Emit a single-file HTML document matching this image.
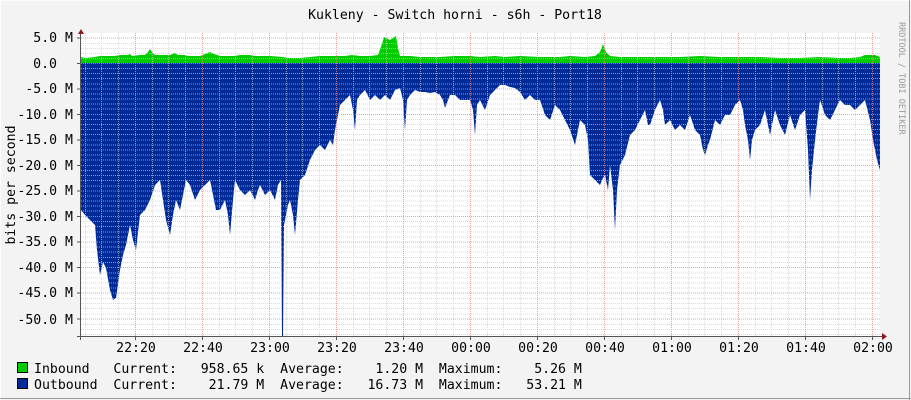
<!DOCTYPE html>
<html><head><meta charset="utf-8"><style>
html,body{margin:0;padding:0;background:#f3f3f3}
svg{display:block}
text{font-family:"DejaVu Sans Mono","Liberation Mono",monospace;font-size:13.2px;fill:#000}
</style></head><body>
<svg width="911" height="400" viewBox="0 0 911 400" xmlns="http://www.w3.org/2000/svg">
<rect x="0" y="0" width="911" height="400" fill="#f3f3f3"/>
<line x1="0" y1="0.5" x2="911" y2="0.5" stroke="#fcfcfc"/>
<line x1="0.5" y1="0" x2="0.5" y2="400" stroke="#fcfcfc"/>
<line x1="0" y1="398.5" x2="911" y2="398.5" stroke="#999"/>
<line x1="909.5" y1="0" x2="909.5" y2="400" stroke="#999"/>
<rect x="81" y="33" width="799" height="303" fill="#fff"/>
<polygon fill="#002a97" points="81,63 81,210 85,215 90,220 95,225 97,250 100,275 103,262 106,268 110,290 113,300 116,298 120,270 123,255 126,245 130,225 133,240 136,250 140,215 145,210 150,200 155,185 160,180 163,200 166,220 170,235 173,215 176,200 180,210 183,195 186,180 190,185 195,200 200,190 205,185 210,180 213,195 216,210 220,210 225,200 228,215 230,235 233,200 235,180 240,190 245,195 250,190 255,200 258,190 260,185 265,195 270,190 275,200 278,185 281,180 282,336 283,336 284,225 288,205 290,200 293,215 295,235 298,200 300,180 305,175 310,160 315,150 320,145 325,150 330,140 333,145 335,130 340,105 345,100 350,95 353,110 355,130 357,100 360,95 365,90 370,100 375,95 380,100 385,95 390,100 395,90 400,88 403,100 405,130 407,100 410,95 415,90 420,92 425,92 430,93 435,92 440,95 443,100 445,108 448,100 450,95 455,95 460,100 465,100 470,100 473,110 475,135 477,105 480,100 485,110 490,95 495,90 500,85 505,85 510,87 515,88 520,92 525,100 530,95 535,100 540,100 545,115 550,120 555,105 560,110 565,120 570,130 575,145 578,130 580,120 585,125 588,140 590,175 595,180 600,185 603,178 605,175 608,190 610,165 613,190 615,230 617,190 620,165 625,155 630,135 635,130 640,120 645,110 648,125 650,125 655,110 660,100 663,110 665,125 670,120 675,130 680,125 685,130 690,115 695,130 700,135 703,150 705,155 708,145 710,140 715,120 720,125 725,115 730,115 735,105 740,100 743,110 745,125 748,140 750,160 752,140 755,130 760,125 765,110 770,135 775,110 780,125 785,135 790,115 795,130 800,115 805,110 808,150 810,200 812,170 815,140 818,115 820,100 825,115 830,120 835,110 840,100 845,105 850,105 855,110 860,105 865,100 870,120 873,140 875,150 877,160 880,170 880,63"/>
<polygon fill="#00cc00" points="81,63 81,57 85,58 95,57 100,56 115,56 120,55 128,55 130,54 132,56 140,55 145,55 148,52 150,49 152,52 155,55 170,55 175,53 178,55 185,55 188,56 200,56 205,54 210,52 214,54 220,56 235,56 240,55 250,55 255,56 270,56 283,57 288,58 300,58 310,57 320,56 335,56 345,56 352,55 360,56 370,56 378,55 382,44 384,37 390,40 396,36 398,48 400,56 410,56 420,57 440,57 455,56 470,56 480,57 495,56 505,57 520,56 540,57 560,57 570,56 585,57 595,56 600,52 603,44 606,52 610,56 620,57 640,57 660,57 680,57 700,56 720,57 740,57 760,57 780,58 800,58 820,57 840,58 850,58 860,57 865,55 875,55 880,57 880,63"/>
<g stroke="#ccc" stroke-width="1" stroke-dasharray="1,1" opacity="0.7">
<line x1="81" y1="43.5" x2="880" y2="43.5"/><line x1="81" y1="48.5" x2="880" y2="48.5"/><line x1="81" y1="53.5" x2="880" y2="53.5"/><line x1="81" y1="58.5" x2="880" y2="58.5"/>
<line x1="81" y1="68.5" x2="880" y2="68.5"/><line x1="81" y1="73.5" x2="880" y2="73.5"/><line x1="81" y1="78.5" x2="880" y2="78.5"/><line x1="81" y1="84" x2="880" y2="84"/>
<line x1="81" y1="94" x2="880" y2="94"/><line x1="81" y1="99" x2="880" y2="99"/><line x1="81" y1="104" x2="880" y2="104"/><line x1="81" y1="109" x2="880" y2="109"/>
<line x1="81" y1="119.5" x2="880" y2="119.5"/><line x1="81" y1="124.5" x2="880" y2="124.5"/><line x1="81" y1="129.5" x2="880" y2="129.5"/><line x1="81" y1="134.5" x2="880" y2="134.5"/>
<line x1="81" y1="145" x2="880" y2="145"/><line x1="81" y1="150" x2="880" y2="150"/><line x1="81" y1="155" x2="880" y2="155"/><line x1="81" y1="160" x2="880" y2="160"/>
<line x1="81" y1="170.5" x2="880" y2="170.5"/><line x1="81" y1="175.5" x2="880" y2="175.5"/><line x1="81" y1="180.5" x2="880" y2="180.5"/><line x1="81" y1="186" x2="880" y2="186"/>
<line x1="81" y1="196" x2="880" y2="196"/><line x1="81" y1="201" x2="880" y2="201"/><line x1="81" y1="206" x2="880" y2="206"/><line x1="81" y1="211" x2="880" y2="211"/>
<line x1="81" y1="221.5" x2="880" y2="221.5"/><line x1="81" y1="226.5" x2="880" y2="226.5"/><line x1="81" y1="232" x2="880" y2="232"/><line x1="81" y1="237" x2="880" y2="237"/>
<line x1="81" y1="247" x2="880" y2="247"/><line x1="81" y1="252" x2="880" y2="252"/><line x1="81" y1="257.5" x2="880" y2="257.5"/><line x1="81" y1="262.5" x2="880" y2="262.5"/>
<line x1="81" y1="273" x2="880" y2="273"/><line x1="81" y1="278" x2="880" y2="278"/><line x1="81" y1="283" x2="880" y2="283"/><line x1="81" y1="288" x2="880" y2="288"/>
<line x1="81" y1="298.5" x2="880" y2="298.5"/><line x1="81" y1="303.5" x2="880" y2="303.5"/><line x1="81" y1="308.5" x2="880" y2="308.5"/><line x1="81" y1="314" x2="880" y2="314"/>
<line x1="81" y1="324.5" x2="880" y2="324.5"/><line x1="81" y1="329.5" x2="880" y2="329.5"/><line x1="81" y1="334.5" x2="880" y2="334.5"/>
<line x1="85.5" y1="33" x2="85.5" y2="336"/><line x1="101.5" y1="33" x2="101.5" y2="336"/><line x1="118.5" y1="33" x2="118.5" y2="336"/>
<line x1="152.5" y1="33" x2="152.5" y2="336"/><line x1="168.5" y1="33" x2="168.5" y2="336"/><line x1="185.5" y1="33" x2="185.5" y2="336"/>
<line x1="219.5" y1="33" x2="219.5" y2="336"/><line x1="235.5" y1="33" x2="235.5" y2="336"/><line x1="252.5" y1="33" x2="252.5" y2="336"/>
<line x1="286.5" y1="33" x2="286.5" y2="336"/><line x1="302.5" y1="33" x2="302.5" y2="336"/><line x1="319.5" y1="33" x2="319.5" y2="336"/>
<line x1="353.5" y1="33" x2="353.5" y2="336"/><line x1="369.5" y1="33" x2="369.5" y2="336"/><line x1="386.5" y1="33" x2="386.5" y2="336"/>
<line x1="420.5" y1="33" x2="420.5" y2="336"/><line x1="436.5" y1="33" x2="436.5" y2="336"/><line x1="453.5" y1="33" x2="453.5" y2="336"/>
<line x1="487.5" y1="33" x2="487.5" y2="336"/><line x1="503.5" y1="33" x2="503.5" y2="336"/><line x1="520.5" y1="33" x2="520.5" y2="336"/>
<line x1="554.5" y1="33" x2="554.5" y2="336"/><line x1="570.5" y1="33" x2="570.5" y2="336"/><line x1="587.5" y1="33" x2="587.5" y2="336"/>
<line x1="621.5" y1="33" x2="621.5" y2="336"/><line x1="637.5" y1="33" x2="637.5" y2="336"/><line x1="654.5" y1="33" x2="654.5" y2="336"/>
<line x1="688.5" y1="33" x2="688.5" y2="336"/><line x1="704.5" y1="33" x2="704.5" y2="336"/><line x1="721.5" y1="33" x2="721.5" y2="336"/>
<line x1="755.5" y1="33" x2="755.5" y2="336"/><line x1="771.5" y1="33" x2="771.5" y2="336"/><line x1="788.5" y1="33" x2="788.5" y2="336"/>
<line x1="822.5" y1="33" x2="822.5" y2="336"/><line x1="838.5" y1="33" x2="838.5" y2="336"/><line x1="855.5" y1="33" x2="855.5" y2="336"/>
</g>
<g stroke="#e88" stroke-width="1" stroke-dasharray="1,1" opacity="0.8">
<line x1="81" y1="38" x2="880" y2="38"/><line x1="81" y1="63.5" x2="880" y2="63.5"/><line x1="81" y1="89" x2="880" y2="89"/><line x1="81" y1="114.5" x2="880" y2="114.5"/><line x1="81" y1="140" x2="880" y2="140"/><line x1="81" y1="165.5" x2="880" y2="165.5"/><line x1="81" y1="191" x2="880" y2="191"/><line x1="81" y1="216.5" x2="880" y2="216.5"/><line x1="81" y1="242" x2="880" y2="242"/><line x1="81" y1="267.5" x2="880" y2="267.5"/><line x1="81" y1="293" x2="880" y2="293"/><line x1="81" y1="319" x2="880" y2="319"/>
<line x1="135.5" y1="33" x2="135.5" y2="336"/><line x1="202.5" y1="33" x2="202.5" y2="336"/><line x1="269.5" y1="33" x2="269.5" y2="336"/><line x1="336.5" y1="33" x2="336.5" y2="336"/><line x1="403.5" y1="33" x2="403.5" y2="336"/><line x1="470.5" y1="33" x2="470.5" y2="336"/><line x1="537.5" y1="33" x2="537.5" y2="336"/><line x1="604.5" y1="33" x2="604.5" y2="336"/><line x1="671.5" y1="33" x2="671.5" y2="336"/><line x1="738.5" y1="33" x2="738.5" y2="336"/><line x1="805.5" y1="33" x2="805.5" y2="336"/><line x1="872.5" y1="33" x2="872.5" y2="336"/>
</g>
<g stroke="#555" stroke-width="1">
<line x1="80.5" y1="32" x2="80.5" y2="340"/>
<line x1="77" y1="336.5" x2="884" y2="336.5"/>
<line x1="77" y1="38" x2="81" y2="38"/><line x1="77" y1="63.5" x2="81" y2="63.5"/><line x1="77" y1="89" x2="81" y2="89"/><line x1="77" y1="114.5" x2="81" y2="114.5"/><line x1="77" y1="140" x2="81" y2="140"/><line x1="77" y1="165.5" x2="81" y2="165.5"/><line x1="77" y1="191" x2="81" y2="191"/><line x1="77" y1="216.5" x2="81" y2="216.5"/><line x1="77" y1="242" x2="81" y2="242"/><line x1="77" y1="267.5" x2="81" y2="267.5"/><line x1="77" y1="293" x2="81" y2="293"/><line x1="77" y1="319" x2="81" y2="319"/>
<line x1="135.5" y1="336" x2="135.5" y2="340"/><line x1="202.5" y1="336" x2="202.5" y2="340"/><line x1="269.5" y1="336" x2="269.5" y2="340"/><line x1="336.5" y1="336" x2="336.5" y2="340"/><line x1="403.5" y1="336" x2="403.5" y2="340"/><line x1="470.5" y1="336" x2="470.5" y2="340"/><line x1="537.5" y1="336" x2="537.5" y2="340"/><line x1="604.5" y1="336" x2="604.5" y2="340"/><line x1="671.5" y1="336" x2="671.5" y2="340"/><line x1="738.5" y1="336" x2="738.5" y2="340"/><line x1="805.5" y1="336" x2="805.5" y2="340"/><line x1="872.5" y1="336" x2="872.5" y2="340"/>
</g>
<polygon fill="#8b1a1a" points="78,34 84,34 81,29"/>
<polygon fill="#8b1a1a" points="882,333 882,340 887,336.5"/>
<text x="455" y="19" text-anchor="middle">Kukleny - Switch horni - s6h - Port18</text>
<g text-anchor="end">
<text x="73" y="42">5.0 M</text><text x="57" y="68">0.0</text><text x="73" y="93">-5.0 M</text><text x="73" y="119">-10.0 M</text><text x="73" y="144">-15.0 M</text><text x="73" y="170">-20.0 M</text><text x="73" y="195">-25.0 M</text><text x="73" y="221">-30.0 M</text><text x="73" y="246">-35.0 M</text><text x="73" y="272">-40.0 M</text><text x="73" y="297">-45.0 M</text><text x="73" y="324">-50.0 M</text>
</g>
<text transform="translate(15,185) rotate(-90)" text-anchor="middle">bits per second</text>
<g text-anchor="middle">
<text x="136" y="352">22:20</text><text x="203" y="352">22:40</text><text x="270" y="352">23:00</text><text x="337" y="352">23:20</text><text x="404" y="352">23:40</text><text x="471" y="352">00:00</text><text x="538" y="352">00:20</text><text x="605" y="352">00:40</text><text x="672" y="352">01:00</text><text x="739" y="352">01:20</text><text x="806" y="352">01:40</text><text x="873" y="352">02:00</text>
</g>
<rect x="17.5" y="362.5" width="10" height="10" fill="#00cc00" stroke="#000"/>
<rect x="17.5" y="378.5" width="10" height="10" fill="#002a97" stroke="#000"/>
<text x="34" y="373" xml:space="preserve">Inbound   Current:   958.65 k  Average:    1.20 M  Maximum:    5.26 M</text>
<text x="34" y="389" xml:space="preserve">Outbound  Current:    21.79 M  Average:   16.73 M  Maximum:   53.21 M</text>
<text transform="translate(899,22) rotate(90)" style="font-size:8.5px;fill:#999">RRDTOOL / TOBI OETIKER</text>
</svg>
</body></html>
